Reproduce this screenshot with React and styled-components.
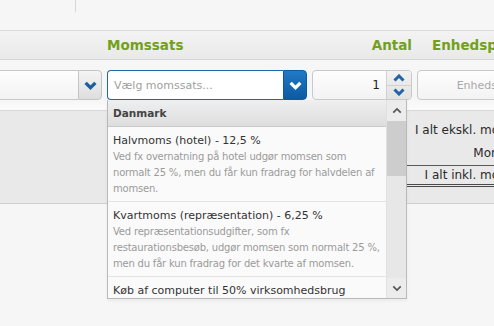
import React from 'react';
import styled, { createGlobalStyle } from 'styled-components';

const Global = createGlobalStyle`
  html, body { margin: 0; padding: 0; }
  body {
    background: #f6f6f6;
    font-family: "DejaVu Sans", Verdana, sans-serif;
    overflow: hidden;
  }
`;

const Page = styled.div`
  position: relative;
  width: 494px;
  height: 326px;
  overflow: hidden;
  background: #f6f6f6;
`;

const TopStrip = styled.div`
  height: 30px;
  display: flex;
`;

const TopDivider = styled.div`
  margin-left: 75px;
  width: 1px;
  height: 12px;
  background: #d6d6d6;
`;

const HeaderBar = styled.div`
  height: 28px;
  border-top: 1px solid #dcdcdc;
  border-bottom: 1px solid #d6d6d6;
  background: linear-gradient(#f3f3f3, #e9e9e9);
  display: grid;
  grid-template-columns: 102px 200px 100px 140px;
  column-gap: 5px;
  align-items: center;
`;

const HeaderLabel = styled.div`
  font-family: "DejaVu Sans", Verdana, sans-serif;
  font-weight: bold;
  font-size: 13.5px;
  color: #72a01b;
  text-align: ${(p) => p.$align || 'left'};
  padding-left: ${(p) => p.$pad || 0}px;
  white-space: nowrap;
`;

const InputRow = styled.div`
  height: 50px;
  padding-top: 10px;
  box-sizing: border-box;
  display: grid;
  grid-template-columns: 102px 200px 100px 140px;
  column-gap: 5px;
  align-items: start;
  background: linear-gradient(#f6f6f6 80%, #fbfbfb);
`;

const Select = styled.div`
  display: flex;
  height: 30px;
  box-sizing: border-box;
`;

const Field = styled.div`
  flex: 1;
  display: flex;
  align-items: center;
  box-sizing: border-box;
  padding-left: 6px;
  font-size: 11px;
  color: #a0a0a0;
  background: ${(p) => (p.$focused ? '#ffffff' : 'linear-gradient(#fdfdfd, #f3f3f3)')};
  border: 1px solid ${(p) => (p.$focused ? '#1c68ad' : '#c9c9c9')};
  border-right: none;
  border-left: ${(p) => (p.$cut ? 'none' : undefined)};
  border-radius: ${(p) => (p.$cut ? '0' : '4px 0 0 4px')};
`;

const DropButton = styled.div`
  width: 24px;
  display: flex;
  align-items: center;
  justify-content: center;
  box-sizing: border-box;
  border-radius: 0 4px 4px 0;
  border: 1px solid ${(p) => (p.$blue ? '#0e5a9e' : '#c4c4c4')};
  background: ${(p) =>
    p.$blue ? 'linear-gradient(#2179c6, #0c5aa2)' : 'linear-gradient(#f4f4f4, #dedede)'};
`;

const NumberBox = styled.div`
  display: flex;
  height: 30px;
  box-sizing: border-box;
  border: 1px solid #c9c9c9;
  border-radius: 4px;
  background: linear-gradient(#fdfdfd, #f3f3f3);
  overflow: hidden;
`;

const NumberValue = styled.div`
  flex: 1;
  display: flex;
  align-items: center;
  justify-content: flex-end;
  padding-right: 6px;
  font-size: 12px;
  color: #222;
`;

const Spinner = styled.div`
  width: 24px;
  display: flex;
  flex-direction: column;
  border-left: 1px solid #d0d0d0;
  background: linear-gradient(#f1f1f1, #e2e2e2);
`;

const SpinHalf = styled.div`
  flex: 1;
  display: flex;
  align-items: center;
  justify-content: center;
  border-top: ${(p) => (p.$lower ? '1px solid #d2d2d2' : 'none')};
`;

const TextBox = styled.div`
  height: 30px;
  box-sizing: border-box;
  border: 1px solid #c9c9c9;
  border-radius: 4px;
  background: linear-gradient(#fdfdfd, #f3f3f3);
  display: flex;
  align-items: center;
  justify-content: center;
  font-size: 11px;
  color: #a8a8a8;
`;

const Summary = styled.div`
  height: 94px;
  box-sizing: border-box;
  border-top: 1px solid #d8d8d8;
  border-bottom: 1px solid #cfcfcf;
  background: #e9e9e9;
  display: flex;
`;

const SummarySpacer = styled.div`
  width: 407px;
  flex-shrink: 0;
`;

const Totals = styled.div`
  width: 110px;
  flex-shrink: 0;
  padding-top: 8px;
  display: flex;
  flex-direction: column;
`;

const TotalLine = styled.div`
  font-size: 12px;
  color: #2a2a2a;
  text-align: right;
  white-space: nowrap;
  height: ${(p) => p.$h}px;
  line-height: ${(p) => p.$h}px;
  padding-right: ${(p) => p.$pr || 0}px;
  border-top: ${(p) => (p.$ruled ? '1px solid #5a5a5a' : 'none')};
  border-bottom: ${(p) => (p.$double ? '3px double #4a4a4a' : 'none')};
`;

const Dropdown = styled.div`
  position: absolute;
  left: 107px;
  top: 100px;
  width: 300px;
  height: 199px;
  box-sizing: border-box;
  border: 1px solid #b9b9b9;
  border-top: none;
  background: #fafafa;
  display: flex;
  box-shadow: 0 2px 3px rgba(0, 0, 0, 0.05);
`;

const List = styled.div`
  flex: 1;
  overflow: hidden;
`;

const Group = styled.div`
  height: 27px;
  box-sizing: border-box;
  border-bottom: 1px solid #c9c9c9;
  background: linear-gradient(#efefef, #dedede);
  display: flex;
  align-items: center;
  padding-left: 5px;
  font-size: 10.5px;
  font-weight: bold;
  color: #444;
`;

const Item = styled.div`
  padding: 6px 5px 4px 5px;
  border-bottom: ${(p) => (p.$last ? 'none' : '1px solid #e3e3e3')};
`;

const ItemTitle = styled.div`
  font-size: 11px;
  line-height: 16px;
  color: #333;
  white-space: nowrap;
`;

const ItemDesc = styled.div`
  font-size: 10px;
  letter-spacing: -0.2px;
  line-height: 16px;
  color: #9a9a9a;
`;

const ScrollBar = styled.div`
  width: 19px;
  display: flex;
  flex-direction: column;
  background: #e7e7e7;
  border-left: 1px solid #e0e0e0;
`;

const ScrollArrow = styled.div`
  height: ${(p) => p.$h}px;
  display: flex;
  align-items: center;
  justify-content: center;
  background: #ececec;
`;

const ScrollThumb = styled.div`
  height: 55px;
  background: #cdcdcd;
`;

const ScrollTrack = styled.div`
  flex: 1;
`;

const Chevron = ({ dir = 'down', color, w = 12, h = 8, sw = 3 }) => (
  <svg width={w} height={h} viewBox="0 0 12 8">
    <polyline
      points={dir === 'down' ? '1.5,1.5 6,6 10.5,1.5' : '1.5,6.5 6,2 10.5,6.5'}
      fill="none"
      stroke={color}
      strokeWidth={sw}
      strokeLinecap="butt"
      strokeLinejoin="miter"
    />
  </svg>
);

const items = [
  {
    title: 'Halvmoms (hotel) - 12,5 %',
    desc: [
      'Ved fx overnatning på hotel udgør momsen som',
      'normalt 25 %, men du får kun fradrag for halvdelen af',
      'momsen.',
    ],
  },
  {
    title: 'Kvartmoms (repræsentation) - 6,25 %',
    desc: [
      'Ved repræsentationsudgifter, som fx',
      'restaurationsbesøb, udgør momsen som normalt 25 %,',
      'men du får kun fradrag for det kvarte af momsen.',
    ],
  },
  { title: 'Køb af computer til 50% virksomhedsbrug', desc: [] },
];

export default function App() {
  return (
    <Page>
      <Global />
      <TopStrip>
        <TopDivider />
      </TopStrip>
      <HeaderBar>
        <div />
        <HeaderLabel>Momssats</HeaderLabel>
        <HeaderLabel $align="right">Antal</HeaderLabel>
        <HeaderLabel $pad={15}>Enhedspris</HeaderLabel>
      </HeaderBar>
      <InputRow>
        <Select>
          <Field $cut />
          <DropButton>
            <Chevron color="#1a5f9f" w={13} h={9} />
          </DropButton>
        </Select>
        <Select>
          <Field $focused>Vælg momssats...</Field>
          <DropButton $blue>
            <Chevron color="#ffffff" w={13} h={9} />
          </DropButton>
        </Select>
        <NumberBox>
          <NumberValue>1</NumberValue>
          <Spinner>
            <SpinHalf>
              <Chevron dir="up" color="#1f65a8" w={12} h={8} />
            </SpinHalf>
            <SpinHalf $lower>
              <Chevron dir="down" color="#1f65a8" w={12} h={8} />
            </SpinHalf>
          </Spinner>
        </NumberBox>
        <TextBox>Enhedspris</TextBox>
      </InputRow>
      <Summary>
        <SummarySpacer />
        <Totals>
          <TotalLine $h={23}>I alt ekskl. moms</TotalLine>
          <TotalLine $h={23} $pr={8}>Moms</TotalLine>
          <TotalLine $h={18} $ruled $double>I alt inkl. moms</TotalLine>
        </Totals>
      </Summary>
      <Dropdown>
        <List>
          <Group>Danmark</Group>
          {items.map((it, i) => (
            <Item key={i} $last={i === items.length - 1}>
              <ItemTitle>{it.title}</ItemTitle>
              {it.desc.map((d, j) => (
                <ItemDesc key={j}>{d}</ItemDesc>
              ))}
            </Item>
          ))}
        </List>
        <ScrollBar>
          <ScrollArrow $h={21}>
            <Chevron dir="up" color="#555" w={10} h={7} sw={2} />
          </ScrollArrow>
          <ScrollThumb />
          <ScrollTrack />
          <ScrollArrow $h={20}>
            <Chevron dir="down" color="#555" w={10} h={7} sw={2} />
          </ScrollArrow>
        </ScrollBar>
      </Dropdown>
    </Page>
  );
}
